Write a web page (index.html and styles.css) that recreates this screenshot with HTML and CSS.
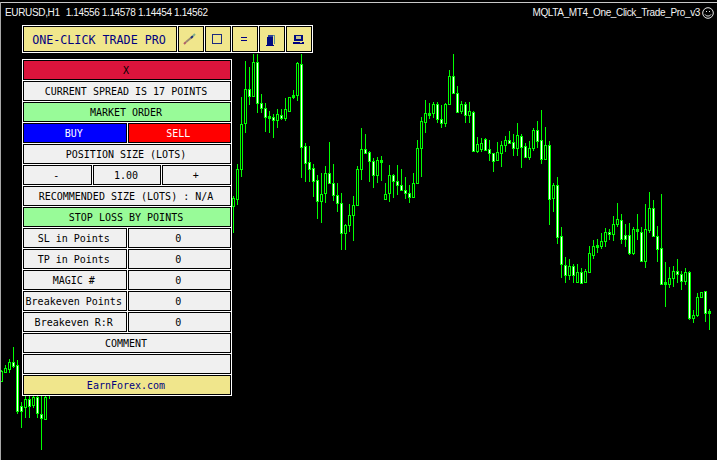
FILE: index.html
```html
<!DOCTYPE html>
<html lang="en">
<head>
<meta charset="utf-8">
<title>EURUSD,H1 - One-Click Trade Pro</title>
<link rel="stylesheet" href="styles.css">
</head>
<body>
<div class="window">
  <svg id="chart" class="chart" width="717" height="460" viewBox="0 0 717 460" shape-rendering="crispEdges" aria-hidden="true"></svg>
  <div class="hud">
    <span class="hud-left"><span class="symbol">EURUSD,H1</span><span>1.14556 1.14578 1.14454 1.14562</span></span>
    <span class="hud-right"><span>MQLTA_MT4_One_Click_Trade_Pro_v3</span>
      <svg class="smiley" width="12" height="12" viewBox="0 0 12 12"><circle cx="6" cy="6" r="5.3" fill="none" stroke="#e8e8e8"/><path d="M4 4h1v1H4zM7 4h1v1H7z" fill="#e8e8e8"/><path d="M3 7.5c1 2 5 2 6 0" fill="none" stroke="#e8e8e8"/></svg>
    </span>
  </div>
  <div class="overlay">
    <div class="toolbar">
      <div class="cell khaki title">ONE-CLICK TRADE PRO</div>
      <div class="cell khaki tool">
        <svg width="14" height="12" viewBox="0 0 14 12"><path d="M1 11l2-2" stroke="#b0606a" stroke-width="2"/><path d="M3 9l6-5" stroke="#9a8a70" stroke-width="2"/><path d="M8 5l2-2" stroke="#20307a" stroke-width="2"/><path d="M10 3l2-2" stroke="#7fb08a" stroke-width="2"/></svg>
      </div>
      <div class="cell khaki tool">
        <svg width="10" height="10" viewBox="0 0 10 10"><rect x="0.5" y="0.5" width="9" height="9" fill="none" stroke="#1c2a80"/></svg>
      </div>
      <div class="cell khaki tool">
        <svg width="6" height="4" viewBox="0 0 6 4"><path d="M0 0h6v1H0zM0 3h6v1H0z" fill="#000080"/></svg>
      </div>
      <div class="cell khaki tool">
        <svg class="book" width="10" height="13" viewBox="0 0 10 13"><path d="M3 1h6v9H8V2H3z" fill="#5f8f8f"/><path d="M1 3h6v9H1z" fill="#000c80"/><path d="M2 1h5v2H2z" fill="#2a3f9a"/><path d="M0 11h8v1H0z" fill="#000080"/></svg>
      </div>
      <div class="cell khaki tool">
        <svg class="disk" width="11" height="10" viewBox="0 0 11 10"><path d="M1 0h9v6H1z" fill="#000c80"/><path d="M3 1h5v3H3z" fill="#c9c48c"/><path d="M0 7h11v2H0z" fill="#000080"/><path d="M7 7h2v1H7z" fill="#c9c48c"/></svg>
      </div>
    </div>
    <div class="panel">
      <div class="row"><div class="cell crimson">X</div></div>
      <div class="row"><div class="cell">CURRENT SPREAD IS 17 POINTS</div></div>
      <div class="row"><div class="cell green">MARKET ORDER</div></div>
      <div class="row"><div class="cell blue">BUY</div><div class="cell red">SELL</div></div>
      <div class="row"><div class="cell">POSITION SIZE (LOTS)</div></div>
      <div class="row"><div class="cell">-</div><div class="cell">1.00</div><div class="cell">+</div></div>
      <div class="row"><div class="cell">RECOMMENDED SIZE (LOTS) : N/A</div></div>
      <div class="row"><div class="cell green">STOP LOSS BY POINTS</div></div>
      <div class="row"><div class="cell">SL in Points</div><div class="cell">0</div></div>
      <div class="row"><div class="cell">TP in Points</div><div class="cell">0</div></div>
      <div class="row"><div class="cell">MAGIC #</div><div class="cell">0</div></div>
      <div class="row"><div class="cell">Breakeven Points</div><div class="cell">0</div></div>
      <div class="row"><div class="cell">Breakeven R:R</div><div class="cell">0</div></div>
      <div class="row"><div class="cell">COMMENT</div></div>
      <div class="row"><div class="cell"></div></div>
      <div class="row"><div class="cell khaki link">EarnForex.com</div></div>
    </div>
  </div>
</div>
<script src="chart.js"></script>
</body>
</html>
```
FILE: styles.css
```css
* { box-sizing: border-box; }
html, body { margin: 0; padding: 0; background: #000; }
.window {
  position: relative;
  width: 717px;
  height: 460px;
  overflow: hidden;
  background: #000;
  padding-top: 2px;
}
.window::before {
  content: "";
  position: absolute;
  left: 0;
  top: 2px;
  width: 717px;
  height: 1px;
  background: #c8c8c8;
}
.window::after {
  content: "";
  position: absolute;
  left: 0;
  top: 2px;
  width: 1px;
  height: 458px;
  background: #a8a8a8;
}
.chart { position: absolute; left: 0; top: 0; display: block; }
.hud {
  position: relative;
  display: flex;
  justify-content: space-between;
  align-items: center;
  height: 20px;
  padding: 0 3px 0 5px;
  font: 10px "Liberation Sans", Arial, sans-serif;
  letter-spacing: -0.35px;
  color: #f4f4f4;
  white-space: nowrap;
}
.symbol { margin-right: 6px; }
.hud-right { display: flex; align-items: center; gap: 2px; }
.smiley { display: block; margin-top: 2px; }
.overlay {
  position: absolute;
  left: 22px;
  top: 25px;
  display: flex;
  flex-direction: column;
  align-items: flex-start;
  gap: 6px;
  font: 10px "DejaVu Sans Mono", "Liberation Mono", monospace;
  color: #000;
}
.toolbar {
  display: flex;
  gap: 1px;
  padding: 1px;
  background: #fff;
}
.panel {
  display: flex;
  flex-direction: column;
  gap: 1px;
  width: 210px;
  padding: 1px;
  background: #fff;
}
.row { display: flex; gap: 1px; height: 20px; }
.cell {
  flex: 1 1 0;
  min-width: 0;
  display: flex;
  align-items: center;
  justify-content: center;
  padding-right: 2px;
  border: 1px solid #000;
  background: #f0f0f0;
  white-space: nowrap;
}
.toolbar .cell { flex: none; height: 26px; }
.khaki { background: #f0e68c; color: #000080; }
.title { width: 154px; font-size: 11.7px; padding-top: 2px; }
.tool { width: 26px; }
.tool svg { display: block; }
.tool .book { margin-top: 3px; }
.tool .disk { margin-top: 1px; }
.crimson { background: #dc143c; }
.green { background: #98fb98; }
.blue { background: #0000ff; color: #fff; }
.red { background: #ff0000; color: #fff; }
```
FILE: chart.js
```js
// Each candle: [wick top, wick bottom, body top, body bottom, fill (w = white, b = black, g = solid)]
var sections = [
  { start: 0, base: 270, data: [
    [300,335,303,332,'b'],[285,310,293,305,'b'],[268,310,275,297,'b'],[232,295,277,287,'w'],
    [270,432,286,422,'w'],[395,473,408,422,'w'],[370,445,388,410,'b'],[370,445,388,407,'w'],
    [370,415,380,405,'b'],[370,445,380,430,'w'],[370,540,433,445,'w'],[370,448,380,446,'b'],[370,388,370,372,'n']
  ]},
  { start: 58, base: 40, data: [
    [468,578,475,497,'b'],[372,495,388,476,'b'],[170,410,252,388,'b'],[63,278,148,250,'b'],
    [82,195,148,167,'w'],[42,172,67,167,'b'],[42,218,67,190,'w'],[162,218,190,203,'w'],
    [190,276,203,230,'w'],[213,278,228,233,'g'],[222,293,232,239,'w'],[207,263,222,239,'b'],
    [207,240,226,233,'w'],[175,242,208,233,'b'],[172,212,172,212,'b'],[150,178,166,170,'g'],
    [67,182,70,166,'b'],[42,413,72,320,'w'],[310,425,318,368,'w'],[318,425,367,386,'w'],
    [372,470,385,422,'w'],[405,537,421,482,'w'],[400,548,463,482,'b'],[378,488,400,460,'b'],
    [306,433,400,430,'w'],[372,482,430,464,'w'],[428,515,466,490,'w'],[460,630,490,580,'w'],
    [552,630,556,580,'b'],[492,575,526,556,'b'],[468,602,496,526,'b'],[378,495,388,494,'b'],
    [264,420,328,388,'b'],[282,340,328,338,'w'],[332,425,336,364,'w'],[355,443,364,404,'w'],
    [352,430,360,404,'b'],[348,422,360,362,'g'],[430,478,462,476,'b'],[375,485,406,460,'b'],
    [402,473,406,422,'w'],[375,465,422,436,'w'],[388,450,436,449,'w'],[412,478,449,458,'w'],
    [435,490,458,472,'w'],[400,472,430,472,'b'],[300,430,325,430,'b'],[232,410,244,325,'b'],
    [180,278,220,245,'b'],[190,237,219,221,'g'],[185,235,193,218,'b'],[185,250,193,236,'w'],
    [195,265,238,248,'w'],[188,260,192,248,'b'],[90,193,108,193,'b'],[42,158,108,158,'w'],
    [138,218,158,215,'w'],[183,222,193,213,'b'],[187,250,193,224,'w'],[185,250,214,224,'b']
  ]},
  { start: 118, base: 100, data: [
    [33,155,35,152,'w'],[110,158,133,152,'b'],[113,155,130,147,'b'],[113,152,118,150,'w'],
    [120,182,148,160,'w'],[158,215,160,182,'w'],[125,180,157,180,'b'],[123,200,136,160,'b'],
    [108,155,121,136,'b'],[93,133,121,128,'w'],[102,168,127,143,'w'],[68,168,106,143,'b'],
    [102,203,109,140,'w'],[130,172,139,170,'w'],[122,180,145,170,'b'],[84,152,91,145,'b'],
    [63,145,91,122,'w'],[30,192,121,178,'w'],[80,178,136,176,'b'],[122,375,136,296,'w'],
    [250,335,256,294,'b'],[232,432,256,410,'w'],[380,534,409,491,'w'],[472,548,496,524,'w'],
    [478,540,499,525,'b'],[493,548,499,526,'w'],[492,548,517,545,'b'],[505,552,515,548,'w'],
    [506,548,514,545,'b'],[438,515,460,515,'b'],[420,476,439,464,'b'],[418,458,436,440,'g'],
    [400,446,424,437,'b'],[384,440,397,424,'b'],[388,420,397,403,'w'],[349,422,373,403,'b'],
    [309,380,358,373,'b'],[342,432,361,416,'w'],[372,442,406,416,'w'],[370,465,406,458,'w'],
    [382,465,388,458,'b'],[342,420,388,394,'g'],[380,483,397,482,'w'],[312,503,388,482,'b'],
    [277,398,325,389,'b'],[300,410,325,409,'w'],[378,486,409,448,'w'],[282,555,445,551,'w'],
    [487,620,546,551,'g'],[502,564,534,551,'b'],[497,560,514,535,'b'],[477,548,514,523,'w'],
    [514,570,523,544,'w'],[504,556,517,544,'b'],[513,660,517,655,'w'],[630,668,646,655,'b'],
    [580,652,592,646,'b'],[576,594,576,592,'b'],[573,665,574,638,'w'],[628,690,633,638,'g']
  ]}
];

var NS = 'http://www.w3.org/2000/svg';
var GREEN = '#00ff00';
var chart = document.getElementById('chart');

function add(name, attrs) {
  var el = document.createElementNS(NS, name);
  for (var k in attrs) el.setAttribute(k, attrs[k]);
  chart.appendChild(el);
}

sections.forEach(function (s) {
  s.data.forEach(function (c, i) {
    var x = 1 + 4 * (s.start + i);
    var y = function (v) { return Math.round(s.base + v / 3); };
    add('rect', { x: x, y: y(c[0]), width: 1, height: Math.max(1, y(c[1]) - y(c[0])), fill: GREEN });
    if (c[4] === 'n') return;
    var top = y(c[2]), bottom = y(c[3]);
    var h = Math.max(2, bottom - top);
    add('rect', { x: x - 1, y: top, width: 3, height: h + 1, fill: GREEN });
    if (c[4] !== 'g' && h > 1) {
      add('rect', { x: x, y: top + 1, width: 1, height: h - 1, fill: c[4] === 'w' ? '#ffffff' : '#000000' });
    }
  });
});
```
